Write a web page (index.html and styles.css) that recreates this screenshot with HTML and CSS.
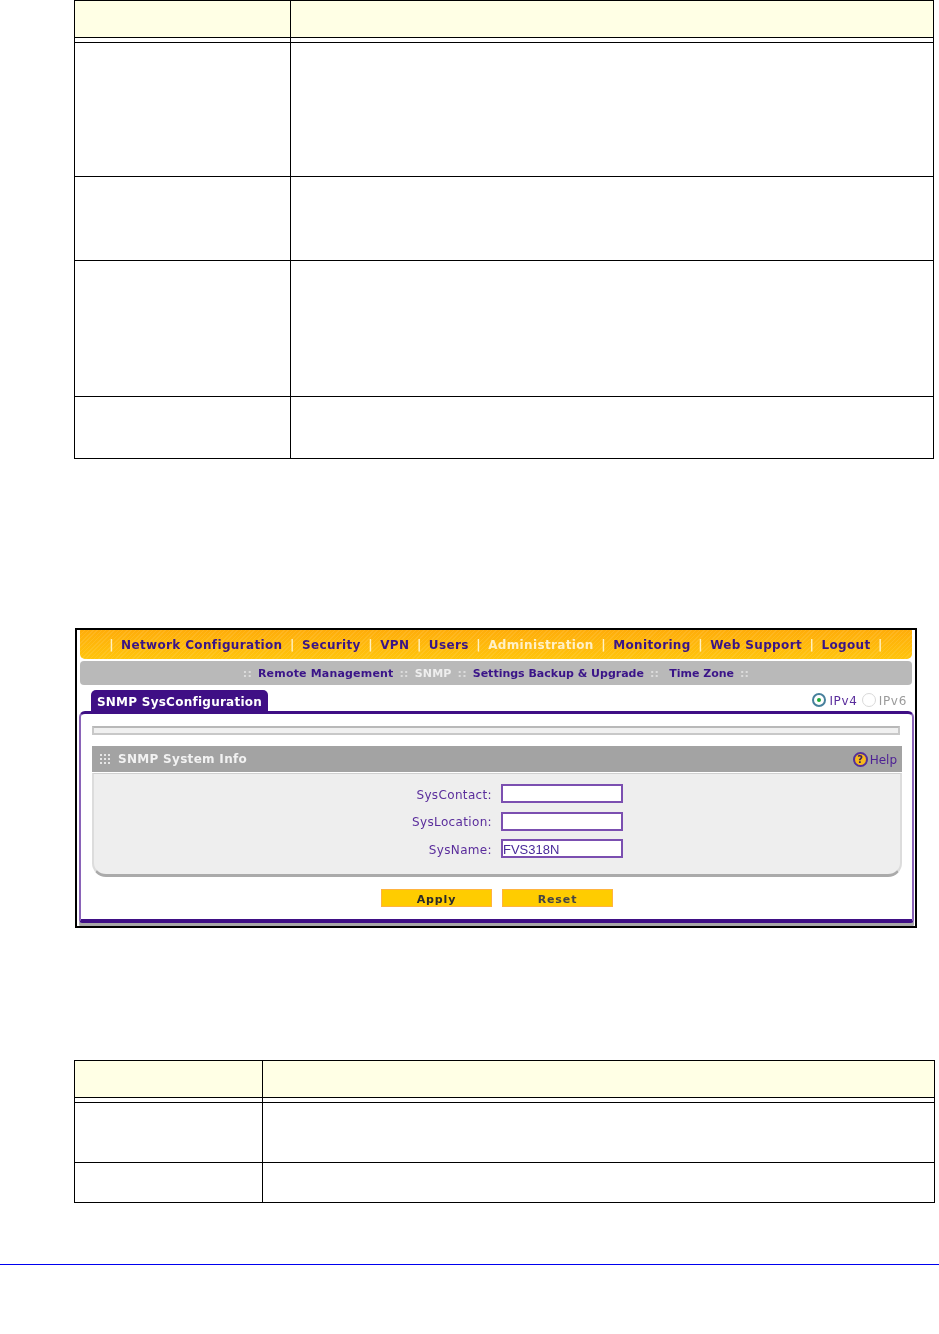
FILE: index.html
```html
<!DOCTYPE html>
<html>
    <head>
        <meta name='viewport' content='width=device-width, initial-scale=1.0'>
        <title>SNMP SysConfiguration</title>
        <link rel="stylesheet" href="styles.css">
    </head>
    <body>
        <div class='page'>
            <table class='doc first'>
                <tr class='head'><td class='c1'></td><td></td></tr>
                <tr class='gap'><td></td><td></td></tr>
                <tr class='h134'><td></td><td></td></tr>
                <tr class='h84'><td></td><td></td></tr>
                <tr class='h136'><td></td><td></td></tr>
                <tr class='h62'><td></td><td></td></tr>
            </table>

            <div class='shot'>
                <div class='blur'>
                    <div class='topnav'>
                        <span class='sep'>|</span><a>Network Configuration</a>
                        <span class='sep'>|</span><a>Security</a>
                        <span class='sep'>|</span><a>VPN</a>
                        <span class='sep'>|</span><a>Users</a>
                        <span class='sep'>|</span><a class='active'>Administration</a>
                        <span class='sep'>|</span><a>Monitoring</a>
                        <span class='sep'>|</span><a>Web Support</a>
                        <span class='sep'>|</span><a>Logout</a>
                        <span class='sep'>|</span>
                    </div>
                    <div class='subnav'>
                        <span class='dots'>::</span><a>Remote Management</a>
                        <span class='dots'>::</span><a class='active'>SNMP</a>
                        <span class='dots'>::</span><a class='tight'>Settings Backup &amp; Upgrade</a>
                        <span class='dots'>::</span><a class='tight zone'>Time Zone</a>
                        <span class='dots'>::</span>
                    </div>
                    <div class='tabrow'>
                        <div class='tab'>SNMP SysConfiguration</div>
                        <div class='ipver'>
                            <span class='radio on'></span><span class='ip4'>IPv4</span>
                            <span class='radio'></span><span class='ip6'>IPv6</span>
                        </div>
                    </div>
                    <div class='panel'>
                        <div class='strip'></div>
                        <div class='sechead'>
                            <svg class='grip' width='10' height='10' viewBox='0 0 10 10'>
                                <path d='M0 0h2v2H0zM4 0h2v2H4zM8 0h2v2H8zM0 4h2v2H0zM4 4h2v2H4zM8 4h2v2H8zM0 8h2v2H0zM4 8h2v2H4zM8 8h2v2H8z' fill='#e6e6e6'/>
                            </svg>
                            <span class='sectitle'>SNMP System Info</span>
                            <span class='help'><span class='helpicon'>?</span>Help</span>
                        </div>
                        <div class='secbox'>
                            <div class='field'><label>SysContact:</label><input class='txt'></div>
                            <div class='field'><label>SysLocation:</label><input class='txt'></div>
                            <div class='field'><label>SysName:</label><input class='txt' value='FVS318N'></div>
                        </div>
                        <div class='buttons'>
                            <button>Apply</button>
                            <button class='reset'>Reset</button>
                        </div>
                    </div>
                </div>
            </div>

            <table class='doc second'>
                <tr class='head'><td class='c1'></td><td></td></tr>
                <tr class='gap'><td></td><td></td></tr>
                <tr class='h60'><td></td><td></td></tr>
                <tr class='h40'><td></td><td></td></tr>
            </table>
        </div>
        <div class='rule'></div>
    </body>
</html>
```

FILE: styles.css
```css
html, body {
    margin: 0;
    padding: 0;
    background: #fff;
}
.page {
    padding-left: 74px;
}
table.doc {
    border-collapse: collapse;
    table-layout: fixed;
    width: 860px;
}
table.doc td {
    border: 1px solid #000;
    padding: 0;
}
table.first .c1 {
    width: 215px;
}
table.second {
    width: 861px;
}
table.second .c1 {
    width: 187px;
}
tr.head {
    height: 37px;
    background: #ffffe5;
}
tr.gap {
    height: 5px;
}
tr.h134 { height: 134px; }
tr.h84 { height: 84px; }
tr.h136 { height: 136px; }
tr.h62 { height: 62px; }
tr.h60 { height: 60px; }
tr.h40 { height: 40px; }

.shot {
    box-sizing: border-box;
    width: 842px;
    height: 300px;
    margin: 169px 0 132px 1px;
    border: 2px solid #000;
    overflow: hidden;
    font-family: "DejaVu Sans", sans-serif;
}
.blur {
    filter: blur(0.5px);
}
.topnav {
    height: 29px;
    margin: 0 3px 0 3px;
    border-radius: 0 0 5px 5px;
    background: repeating-linear-gradient(135deg, rgba(255,255,255,0.09) 0 1px, rgba(255,255,255,0) 1px 3px), linear-gradient(#ffad0a, #ffc40c);
    font-size: 12px;
    font-weight: bold;
    line-height: 31px;
    letter-spacing: 0.35px;
    text-align: center;
    color: #3a1488;
    white-space: nowrap;
}
.topnav a {
    margin: 0 3px 0 7.2px;
}
.topnav a.active {
    color: #fff0c8;
}
.topnav .sep {
    color: #fff2c4;
}
.subnav {
    height: 24px;
    margin: 2px 3px 0 3px;
    border-radius: 4px;
    background: #b9b9b9;
    font-size: 11px;
    font-weight: bold;
    line-height: 26px;
    letter-spacing: 0.18px;
    text-align: center;
    color: #3a1488;
    white-space: nowrap;
}
.subnav a {
    margin: 0 2px 0 6px;
}
.subnav a.tight {
    letter-spacing: 0;
}
.subnav a.zone {
    margin-left: 10px;
}
.subnav a.active {
    color: #eeeeee;
}
.subnav .dots {
    color: #dcdcdc;
}
.tabrow {
    display: flex;
    justify-content: space-between;
    height: 21px;
    margin: 5px 8px 0 14px;
}
.tab {
    box-sizing: border-box;
    width: 177px;
    border-radius: 5px 5px 0 0;
    background: #3f0f85;
    color: #fff;
    font-size: 12px;
    font-weight: bold;
    line-height: 25px;
    text-align: center;
    letter-spacing: 0.25px;
}
.ipver {
    display: flex;
    align-items: center;
    height: 20px;
    font-size: 12px;
    letter-spacing: 0.7px;
}
.radio {
    box-sizing: border-box;
    position: relative;
    width: 14px;
    height: 14px;
    border-radius: 50%;
    border: 1px solid #d8d8d8;
    background: #fff;
}
.radio.on {
    border: 2px solid #47809c;
}
.radio.on::after {
    content: '';
    position: absolute;
    left: 3px;
    top: 3px;
    width: 4px;
    height: 4px;
    border-radius: 50%;
    background: #1fa838;
}
.ip4 {
    margin: 2px 4px 0 3px;
    color: #5a2d9c;
}
.ip6 {
    margin: 2px 0 0 3px;
    color: #9a9a9a;
}
.panel {
    box-sizing: border-box;
    width: 835px;
    height: 212px;
    margin-left: 2px;
    padding: 12px 10px 0 11px;
    border: 2px solid #8a63b8;
    border-top: 3px solid #3f0f85;
    border-bottom: 4px solid #3f0f85;
    border-radius: 6px 6px 3px 3px;
    box-shadow: 0 4px 0 #a8a8a8;
}
.strip {
    box-sizing: border-box;
    width: 808px;
    height: 9px;
    border: 2px solid #c8c8c8;
    border-top-color: #b8b8b8;
    background: #f0f0f0;
}
.sechead {
    display: flex;
    align-items: center;
    height: 26px;
    margin-top: 11px;
    background: #a3a3a3;
}
.grip {
    margin-left: 8px;
}
.sectitle {
    margin-left: 8px;
    color: #f2f2f2;
    font-size: 12px;
    font-weight: bold;
    letter-spacing: 0.3px;
}
.help {
    display: flex;
    align-items: center;
    margin-left: auto;
    margin-right: 5px;
    padding-top: 2px;
    color: #4e2294;
    font-size: 12px;
}
.helpicon {
    box-sizing: border-box;
    width: 15px;
    height: 15px;
    margin: -1px 2px 0 0;
    border: 2px solid #54309a;
    border-radius: 50%;
    background: #f6b81c;
    color: #3a2060;
    font-size: 10px;
    font-weight: bold;
    line-height: 11px;
    text-align: center;
}
.secbox {
    box-sizing: border-box;
    height: 104px;
    margin-top: 1px;
    padding-top: 10px;
    border: 2px solid #dcdcdc;
    border-top: 1px solid #d0d0d0;
    border-bottom: 3px solid #aaaaaa;
    border-radius: 0 0 14px 14px;
    background: #eeeeee;
}
.field {
    display: flex;
    justify-content: flex-end;
    align-items: center;
    height: 19px;
    margin-bottom: 8.5px;
    padding-right: 277px;
}
.field label {
    margin-right: 9px;
    padding-top: 2px;
    color: #5a2d9c;
    font-size: 12px;
    letter-spacing: 0.35px;
}
input.txt {
    box-sizing: border-box;
    width: 122px;
    height: 19px;
    padding: 1px 0 0 0;
    border: 2px solid #7b4fb0;
    background: #fff;
    color: #4a2a9a;
    font-family: "Liberation Sans", sans-serif;
    font-size: 13px;
    outline: none;
}
.buttons {
    display: flex;
    gap: 10px;
    margin: 12px 0 0 289px;
}
.buttons button {
    box-sizing: border-box;
    width: 111px;
    height: 18px;
    padding: 2px 0 0 0;
    border: 1px solid #ffb340;
    background: #ffcc00;
    color: #2a2a2a;
    font-family: "DejaVu Sans", sans-serif;
    font-size: 11px;
    font-weight: bold;
    letter-spacing: 0.9px;
}
.buttons button.reset {
    color: #444;
}
.rule {
    height: 1px;
    margin-top: 61px;
    background: #0000f0;
}
```
